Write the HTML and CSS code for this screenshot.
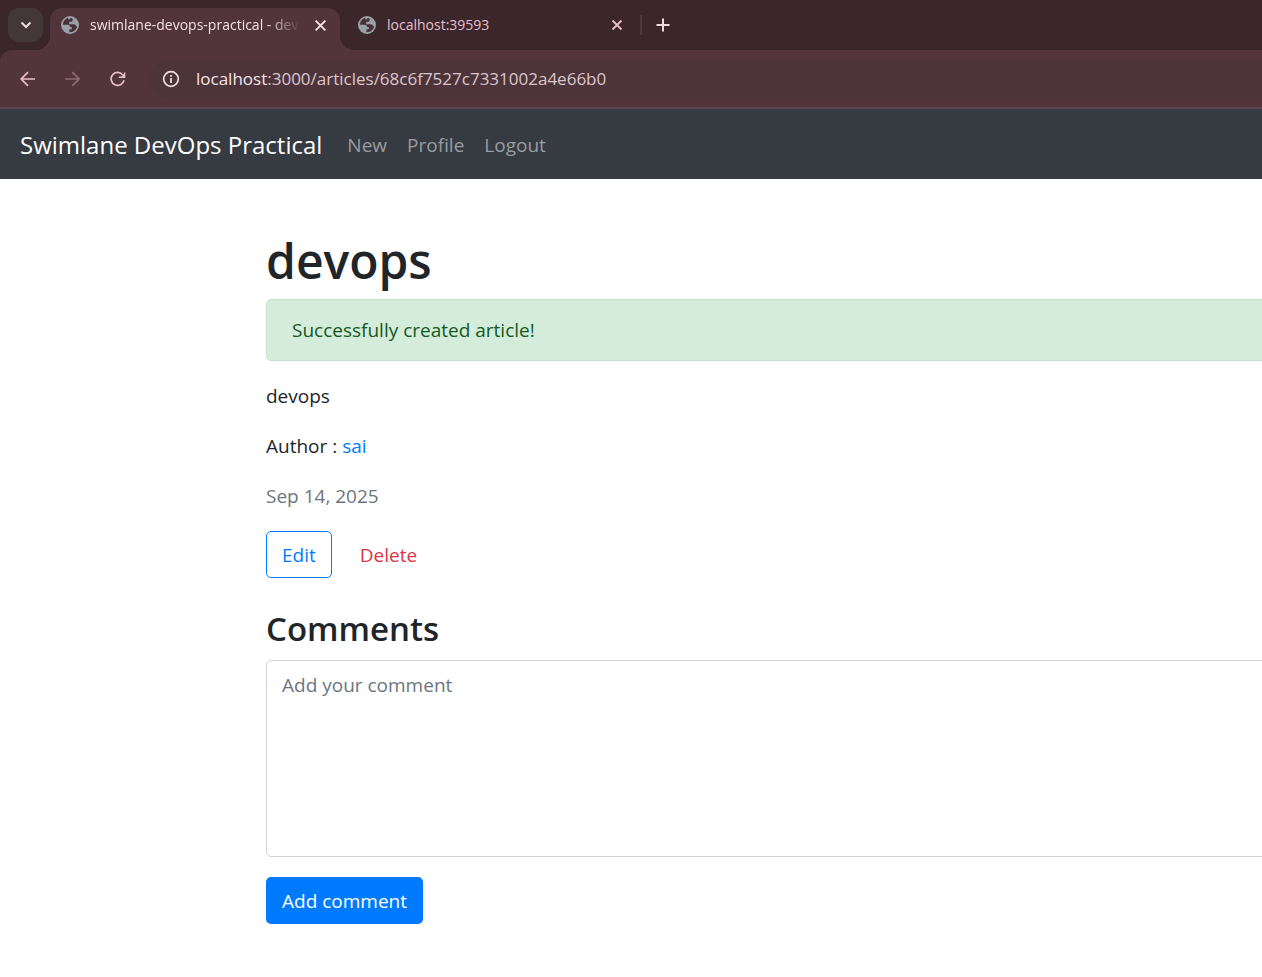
FILE: index.html
```html
<!DOCTYPE html>
<html lang="en">
<head>
<meta charset="utf-8">
<title>swimlane-devops-practical - devops</title>
<link rel="stylesheet" href="styles.css">
</head>
<body>
<svg class="sprite" aria-hidden="true">
  <symbol id="globe" viewBox="0 0 18 18">
    <circle cx="9" cy="9" r="9" fill="#9aa0a8"/>
    <path d="M7.2 1.8C4 2.8 1.9 5.600 1.900 8.700l4.600.1c1.600 0 2.500.8 2.500 2.100h1.800v2.400H8.400v2.800c3.900.3 7-2.400 7.600-5.700l-1.100-.8c-.6-1-1.400-1.400-2.600-1.400H8.200V5.700h1.900c1 0 1.600-.6 1.600-1.500V3.100L10 1.800c-.7 0-.6 1.500-1.300 1.500H7.200z" fill="#4a3137"/>
  </symbol>
  <symbol id="close" viewBox="0 0 12 12"><path d="M1.500 1.500l9 9m0-9l-9 9" fill="none" stroke="currentColor" stroke-width="1.800"/></symbol>
</svg>
<header class="browser">
  <div class="tabstrip">
    <button class="tab-search" aria-label="Search tabs"><svg width="12" height="8" viewBox="0 0 12 8"><path d="M1.500 1.500L6 6l4.500-4.500" fill="none" stroke="currentColor" stroke-width="2"/></svg></button>
    <div class="tab tab-active">
      <svg class="favicon"><use href="#globe"/></svg>
      <span class="tab-title">swimlane-devops-practical - dev</span>
      <button class="tab-close" aria-label="Close tab"><svg width="13" height="13"><use href="#close"/></svg></button>
    </div>
    <div class="tab">
      <svg class="favicon"><use href="#globe"/></svg>
      <span class="tab-title">localhost:39593</span>
      <button class="tab-close" aria-label="Close tab"><svg width="12" height="12"><use href="#close"/></svg></button>
    </div>
    <span class="tab-divider"></span>
    <button class="new-tab" aria-label="New tab"><svg width="14" height="14" viewBox="0 0 14 14"><path d="M7 .5v13M.5 7h13" stroke="currentColor" stroke-width="2"/></svg></button>
  </div>
  <div class="toolbar">
    <button class="tool" aria-label="Back"><svg width="16" height="16" viewBox="0 0 16 16"><path d="M15 8H1.500M8 1.200L1.200 8 8 14.800" fill="none" stroke="currentColor" stroke-width="1.700"/></svg></button>
    <button class="tool tool-off" aria-label="Forward"><svg width="16" height="16" viewBox="0 0 16 16"><path d="M0 8h13.500M7.300 1.200L14.100 8l-6.800 6.800" fill="none" stroke="currentColor" stroke-width="1.700"/></svg></button>
    <button class="tool" aria-label="Reload"><svg width="16" height="16" viewBox="0 0 16 16"><path d="M14 9.300A6.500 6.500 0 1 1 12.600 3.700" fill="none" stroke="currentColor" stroke-width="1.700"/><path d="M15.300.4v6.700H8.800l0-1.500h2.700z" fill="currentColor"/></svg></button>
    <div class="omnibox">
      <svg width="18" height="18" viewBox="0 0 18 18"><circle cx="9" cy="9" r="7.300" fill="none" stroke="currentColor" stroke-width="1.700"/><path d="M9 8v5M9 5v1.800" stroke="currentColor" stroke-width="1.800"/></svg>
      <span class="url"><span class="host">localhost</span>:3000/articles/68c6f7527c7331002a4e66b0</span>
    </div>
  </div>
</header>
<nav class="navbar">
  <a class="brand" href="#">Swimlane DevOps Practical</a>
  <a class="nav-link" href="#">New</a>
  <a class="nav-link" href="#">Profile</a>
  <a class="nav-link" href="#">Logout</a>
</nav>
<main class="page">
  <div class="container">
    <h1>devops</h1>
    <div class="alert" role="alert">Successfully created article!</div>
    <p>devops</p>
    <p>Author : <a class="author" href="#">sai</a></p>
    <p class="muted">Sep 14, 2025</p>
    <div class="actions">
      <a class="btn btn-outline" href="#">Edit</a>
      <button class="btn btn-delete">Delete</button>
    </div>
    <h3>Comments</h3>
    <form class="comment-form">
      <textarea class="comment-box" aria-label="Comment" placeholder="Add your comment"></textarea>
      <button class="btn btn-primary" type="button">Add comment</button>
    </form>
  </div>
</main>
</body>
</html>
```
FILE: styles.css
```css
* { box-sizing: border-box; }
body {
  margin: 0;
  background: #fff;
  color: #212529;
  font-family: "Open Sans", "Noto Sans", sans-serif;
  font-size: 19px;
  line-height: 30px;
}
a { text-decoration: none; }
button {
  padding: 0;
  border: 0;
  background: none;
  color: inherit;
  font: inherit;
}
svg { display: block; flex: none; }
.sprite { position: absolute; width: 0; height: 0; }

.browser { background: #3a262b; color: #f0dce0; }
.tabstrip {
  display: flex;
  align-items: center;
  height: 50px;
  padding-left: 8px;
}
.tab-search {
  display: grid;
  place-items: center;
  width: 35px;
  height: 34px;
  margin-right: 7px;
  border-radius: 11px;
  background: #443739;
}
.tab {
  display: flex;
  align-items: center;
  width: 290px;
  height: 42px;
  margin-top: 8px;
  padding: 0 13px 8px 11px;
  color: #e8bfc9;
  font-size: 14px;
  line-height: 24px;
}
.tab + .tab { padding: 0 6px 8px 18px; }
.tab-active {
  position: relative;
  border-radius: 12px 12px 0 0;
  background: #52353a;
  color: #f4e0e4;
}
.tab-active::before, .tab-active::after {
  content: "";
  position: absolute;
  bottom: 0;
  width: 14px;
  height: 14px;
}
.tab-active::before {
  right: 100%;
  background: radial-gradient(circle at 0 0, transparent 14px, #52353a 14px);
}
.tab-active::after {
  left: 100%;
  background: radial-gradient(circle at 100% 0, transparent 14px, #52353a 14px);
}
.favicon { width: 18px; height: 18px; }
.tab-title {
  flex: 1;
  min-width: 0;
  margin: 0 8px 0 11px;
  overflow: hidden;
  white-space: nowrap;
}
.tab-active .tab-title {
  -webkit-mask-image: linear-gradient(to right, #000 calc(100% - 38px), transparent calc(100% - 4px));
  mask-image: linear-gradient(to right, #000 calc(100% - 38px), transparent calc(100% - 4px));
}
.tab-close { display: grid; place-items: center; width: 14px; height: 18px; }
.tab-divider { width: 2px; height: 20px; margin: 0 14px 0 10px; background: #4b3a3d; }
.new-tab { color: #f0dce0; }

.toolbar {
  display: flex;
  align-items: center;
  height: 59px;
  padding-left: 20px;
  border-bottom: 2px solid #57474a;
  border-radius: 12px 0 0 0;
  background: #52353a;
}
.tool { margin-right: 29px; color: #e8bfc9; }
.tool-off { color: #8c6a71; }
.omnibox {
  display: flex;
  flex: 1;
  align-items: center;
  gap: 16px;
  height: 40px;
  margin-left: -5px;
  padding-left: 12px;
  border-radius: 20px 0 0 20px;
  background: #4c343a;
}
.url { color: #dcc6ca; font-size: 17px; }
.host { color: #f4e4e7; }

.navbar {
  display: flex;
  align-items: center;
  gap: 20px;
  height: 70px;
  padding: 2px 20px 0;
  background: #363a41;
}
.brand { margin-right: 5px; color: #fff; font-size: 24px; }
.nav-link { color: #999ca0; }

.page { overflow: hidden; padding: 52px 0 53px 266px; }
.container { margin-right: -20px; }
h1 { margin: 0 0 8px; font-size: 48px; font-weight: 600; line-height: 60px; }
h3 { margin: 30px 0 10px; font-size: 33px; font-weight: 600; line-height: 42px; }
p { margin: 0 0 20px; }
.alert {
  margin-bottom: 20px;
  padding: 15px 25px;
  border: 1px solid #c3e6cb;
  border-radius: 5px;
  background: #d4edda;
  color: #155724;
}
.author { color: #007bff; }
.muted { color: #6c757d; }
.actions { display: flex; gap: 12px; }
.btn {
  height: 47px;
  padding: 8px 15px;
  border: 1px solid transparent;
  border-radius: 5px;
  line-height: 30px;
}
.btn-outline { border-color: #007bff; color: #007bff; }
.btn-delete { color: #dc3545; }
.btn-primary { background: #007bff; color: #fff; }
.comment-form { display: grid; justify-items: start; gap: 20px; }
.comment-box {
  display: block;
  width: 100%;
  height: 197px;
  padding: 9px 15px;
  border: 1px solid #ced4da;
  border-radius: 5px;
  background: #fff;
  color: #495057;
  font: inherit;
  resize: none;
}
.comment-box::placeholder { color: #6c757d; opacity: 1; }
```
